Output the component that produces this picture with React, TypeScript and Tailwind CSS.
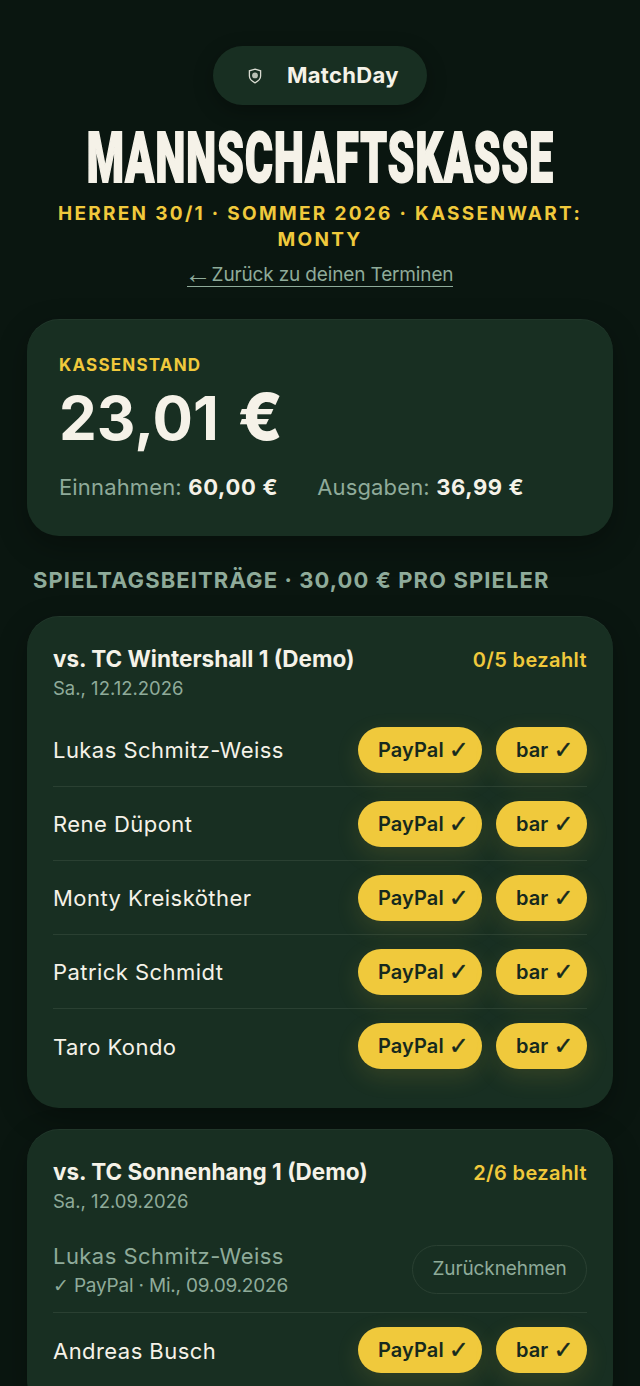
import type { ReactNode } from "react";

const sans = "font-['Inter','Liberation_Sans',sans-serif]";
const cardShadow = "shadow-[inset_0_1px_0_rgba(255,255,255,0.04),0_10px_30px_rgba(0,0,0,0.3)]";

function Shield() {
    return (
        <svg width="14" height="16" viewBox="0 0 14 16" fill="none">
            <path
                d="M7 1.2 12.6 2.8V8c0 3-2.3 5.2-5.6 6.8C3.7 13.2 1.4 11 1.4 8V2.8L7 1.2Z"
                stroke="#d9dcd2"
                strokeWidth="1.3"
            />
            <circle cx="7" cy="7.4" r="2.9" fill="#b9c2b6" />
        </svg>
    );
}

function Tick() {
    return (
        <span className="font-['DejaVu_Sans',sans-serif] text-[24px] leading-none font-bold [-webkit-text-stroke:0.4px_#16291e]">
            ✓
        </span>
    );
}

function PlayerRow({ name }: { name: string }) {
    return (
        <div className="flex h-[74px] items-center justify-between border-b border-[#2a4032] last:border-b-0">
            <span className="pt-[2px] text-[22px] tracking-[0.45px] text-[#f5f2e8]">{name}</span>
            <div className="flex gap-[14px]">
                <button className="flex h-[46px] w-[124px] items-center gap-[5px] rounded-full bg-[#f0c93c] pl-[20px] text-[20px] font-semibold tracking-[0.1px] text-[#16291e] shadow-[0_8px_24px_rgba(240,201,60,0.13)]">
                    <span>PayPal</span>
                    <Tick />
                </button>
                <button className="flex h-[46px] w-[91px] items-center gap-[5px] rounded-full bg-[#f0c93c] pl-[20px] text-[20px] font-semibold tracking-[0.1px] text-[#16291e] shadow-[0_8px_24px_rgba(240,201,60,0.13)]">
                    <span>bar</span>
                    <Tick />
                </button>
            </div>
        </div>
    );
}

function PaidRow({ name, info }: { name: string; info: string }) {
    return (
        <div className="flex h-[87px] items-center justify-between border-b border-[#2a4032]">
            <div className="pt-[3px]">
                <div className="text-[22px] leading-[29px] tracking-[0.45px] text-[#8fab9a]">{name}</div>
                <div className="text-[19px] leading-[29px] tracking-[-0.2px] text-[#8fab9a]">
                    <span className="font-['DejaVu_Sans',sans-serif]">✓</span> {info}
                </div>
            </div>
            <button className="h-[49px] w-[175px] rounded-full border border-[#2a4032] pt-[1px] text-center text-[19px] tracking-[-0.1px] text-[#8fab9a]">
                Zurücknehmen
            </button>
        </div>
    );
}

function MatchCard({
    title,
    date,
    paid,
    children,
}: {
    title: string;
    date: string;
    paid: string;
    children: ReactNode;
}) {
    return (
        <section className={`rounded-[32px] bg-[#182f22] px-[26px] pt-[28px] pb-[25px] ${cardShadow}`}>
            <div className="flex items-start justify-between">
                <h2 className="text-[22.5px] leading-[30px] font-bold text-[#f5f2e8]">{title}</h2>
                <span className="mt-[3px] text-[20px] leading-[26px] font-semibold tracking-[0.4px] text-[#f0c93c]">{paid}</span>
            </div>
            <p className="text-[18.5px] leading-[28px] text-[#8fab9a]">{date}</p>
            <div className="mt-[11px]">{children}</div>
        </section>
    );
}

export default function App() {
    const first = ["Lukas Schmitz-Weiss", "Rene Düpont", "Monty Kreisköther", "Patrick Schmidt", "Taro Kondo"];

    return (
        <div className={`h-[1386px] overflow-hidden bg-[#0a1610] ${sans}`}>
            <main className="px-[27px] pt-[46px]">
                <header className="flex flex-col items-center">
                    <div className="flex h-[59px] w-[214px] items-center rounded-full bg-[#182f22] pl-[35px] shadow-[0_6px_20px_rgba(0,0,0,0.3)]">
                        <Shield />
                        <span className="ml-[25px] text-[22px] font-bold tracking-[0.3px] text-[#f5f2e8]">MatchDay</span>
                    </div>
                    <h1 className="mt-[15px] origin-center scale-x-[0.605] whitespace-nowrap font-['Roboto',sans-serif] text-[70px] leading-[76px] font-black tracking-[2px] text-[#f5f2e8] [-webkit-text-stroke:2px_#f5f2e8]">
                        MANNSCHAFTSKASSE
                    </h1>
                    <p className="mt-[5px] text-center text-[19px] leading-[26px] font-bold tracking-[2.3px] text-[#f0c93c]">
                        HERREN 30/1 · SOMMER 2026 · KASSENWART:
                        <br />
                        MONTY
                    </p>
                    <a className="mt-[10px] flex h-[24px] items-center gap-[3px] border-b border-[#8fab9a] text-[19px] tracking-[-0.15px] text-[#8fab9a]">
                        <span className="flex w-[22px] justify-center font-['Liberation_Sans',sans-serif] text-[27px] leading-none">←</span>
                        <span className="leading-[23px]">Zurück zu deinen Terminen</span>
                    </a>
                </header>

                <section className={`mt-[32px] h-[217px] rounded-[32px] bg-[#182f22] px-[32px] pt-[34px] ${cardShadow}`}>
                    <div className="text-[17px] leading-[24px] font-bold tracking-[1.2px] text-[#f0c93c]">KASSENSTAND</div>
                    <div className="mt-[6px] text-[60px] leading-[70px] font-bold text-[#f5f2e8]">
                        23,01 <span className="ml-[5px] text-[65px] leading-none font-extrabold">€</span>
                    </div>
                    <div className="mt-[19px] flex gap-[39px] text-[22px] leading-[30px] tracking-[0.15px] text-[#8fab9a]">
                        <span>
                            Einnahmen: <b className="font-bold tracking-[0.7px] text-[#f5f2e8]">60,00 €</b>
                        </span>
                        <span>
                            Ausgaben: <b className="font-bold tracking-[0.6px] text-[#f5f2e8]">36,99 €</b>
                        </span>
                    </div>
                </section>

                <h3 className="mt-[29px] ml-[6px] text-[22px] leading-[30px] font-bold tracking-[1.1px] text-[#8fab9a]">
                    SPIELTAGSBEITRÄGE · 30,00 € PRO SPIELER
                </h3>

                <div className="mt-[21px] flex flex-col gap-[21px]">
                    <MatchCard title="vs. TC Wintershall 1 (Demo)" date="Sa., 12.12.2026" paid="0/5 bezahlt">
                        {first.map((n) => (
                            <PlayerRow key={n} name={n} />
                        ))}
                    </MatchCard>
                    <MatchCard title="vs. TC Sonnenhang 1 (Demo)" date="Sa., 12.09.2026" paid="2/6 bezahlt">
                        <PaidRow name="Lukas Schmitz-Weiss" info="PayPal · Mi., 09.09.2026" />
                        <PlayerRow name="Andreas Busch" />
                    </MatchCard>
                </div>
            </main>
        </div>
    );
}
